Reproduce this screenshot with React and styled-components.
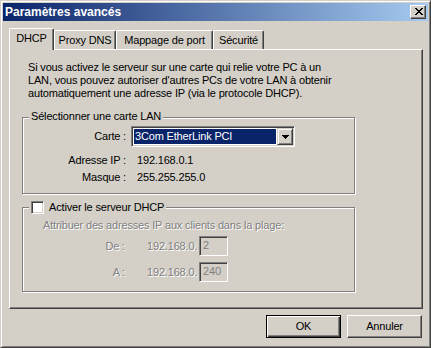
import React from "react";
import styled, { createGlobalStyle } from "styled-components";

const FACE = "#d4d0c8";
const SHADOW = "#808080";
const DARK = "#404040";

const Global = createGlobalStyle`
  html, body { margin: 0; padding: 0; background: ${FACE}; }
  body {
    font-family: "Liberation Sans", Arial, sans-serif;
    font-size: 11px;
    letter-spacing: -0.17px;
    color: #000;
  }
  * { box-sizing: border-box; }
`;

const Window = styled.div`
  width: 431px;
  height: 348px;
  background: ${FACE};
  border: 1px solid;
  border-color: ${FACE} ${DARK} ${DARK} ${FACE};
  box-shadow: inset 1px 1px #fff, inset -1px -1px ${SHADOW};
  padding: 2px;
  display: flex;
  flex-direction: column;
`;

const TitleBar = styled.div`
  height: 18px;
  flex: none;
  display: flex;
  align-items: center;
  justify-content: space-between;
  padding: 0 2px 0 2px;
  background: linear-gradient(to right, #0a246a, #a6caf0);
`;

const Title = styled.span`
  color: #fff;
  font-weight: bold;
  font-size: 12px;
  letter-spacing: 0;
  line-height: 14px;
`;

const CloseButton = styled.div`
  width: 16px;
  height: 14px;
  background: ${FACE};
  border: 1px solid;
  border-color: #fff ${DARK} ${DARK} #fff;
  box-shadow: inset -1px -1px ${SHADOW};
  display: flex;
  justify-content: center;
  align-items: flex-start;
  padding: 2px 0 0 1px;
`;

const Body = styled.div`
  flex: 1;
  display: flex;
  flex-direction: column;
  padding: 7px 5px 7px 6px;
`;

const TabStrip = styled.div`
  height: 21px;
  flex: none;
  display: flex;
  align-items: flex-end;
  position: relative;
  z-index: 2;
`;

const Tab = styled.div`
  width: ${(p) => p.$w}px;
  height: ${(p) => (p.$active ? 22 : 19)}px;
  margin-bottom: ${(p) => (p.$active ? -1 : 0)}px;
  background: ${FACE};
  border-left: 1px solid #fff;
  border-top: 1px solid #fff;
  border-right: 1px solid ${DARK};
  border-top-left-radius: 2px;
  border-top-right-radius: 2px;
  box-shadow: inset -1px 0 ${SHADOW};
  display: flex;
  justify-content: center;
  align-items: flex-start;
  padding-top: 3px;
  line-height: 13px;
  white-space: nowrap;
`;

const Panel = styled.div`
  flex: 1;
  position: relative;
  z-index: 1;
  border-top: 1px solid #fff;
  border-left: 1px solid #fff;
  border-right: 1px solid ${DARK};
  border-bottom: 1px solid ${DARK};
  box-shadow: inset -1px -1px ${SHADOW};
  padding: 11px 0 0 12px;
  display: flex;
  flex-direction: column;
  align-items: flex-start;
`;

const Paragraph = styled.p`
  margin: 0 0 0 6px;
  line-height: 13px;
  white-space: nowrap;
`;

const Group = styled.div`
  position: relative;
  width: 333px;
  margin-top: ${(p) => p.$mt}px;
  border: 1px solid ${SHADOW};
  box-shadow: inset 1px 1px #fff, 1px 1px #fff;
  padding: ${(p) => p.$pad};
`;

const Legend = styled.div`
  position: absolute;
  left: 6px;
  top: ${(p) => p.$top}px;
  padding: 0 2px;
  background: ${FACE};
  line-height: 13px;
  display: flex;
  align-items: center;
  gap: 5px;
  white-space: nowrap;
`;

const FieldGrid = styled.div`
  display: grid;
  grid-template-columns: 103px auto;
  column-gap: 5px;
  align-items: center;
`;

const FieldLabel = styled.div`
  text-align: right;
  line-height: 13px;
  white-space: nowrap;
  margin-top: ${(p) => p.$mt || 0}px;
`;

const FieldValue = styled.div`
  padding-left: 6px;
  line-height: 13px;
  margin-top: ${(p) => p.$mt || 0}px;
`;

const Combo = styled.div`
  width: 164px;
  height: 21px;
  background: #fff;
  border: 1px solid;
  border-color: ${SHADOW} #fff #fff ${SHADOW};
  box-shadow: inset 1px 1px ${DARK}, inset -1px -1px ${FACE};
  padding: 2px;
  display: flex;
  align-items: stretch;
`;

const ComboText = styled.div`
  flex: 1;
  background: #0a246a;
  color: #fff;
  line-height: 15px;
  padding-left: 1px;
  margin-right: 1px;
  white-space: nowrap;
  overflow: hidden;
`;

const ArrowButton = styled.div`
  width: 16px;
  margin: -1px -1px -1px 0;
  background: ${FACE};
  border: 1px solid;
  border-color: ${FACE} ${DARK} ${DARK} ${FACE};
  box-shadow: inset 1px 1px #fff, inset -1px -1px ${SHADOW};
  display: flex;
  align-items: center;
  justify-content: center;
`;

const Checkbox = styled.div`
  width: 13px;
  height: 13px;
  background: #fff;
  border: 1px solid;
  border-color: ${SHADOW} #fff #fff ${SHADOW};
  box-shadow: inset 1px 1px ${DARK}, inset -1px -1px ${FACE};
`;

const Disabled = styled.div`
  color: ${SHADOW};
  text-shadow: 1px 1px #fff;
  line-height: 13px;
  white-space: nowrap;
`;

const Hint = styled(Disabled)`
  margin-left: 20px;
`;

const RangeRow = styled.div`
  display: flex;
  align-items: center;
  margin-top: ${(p) => p.$mt}px;
`;

const RangeLabel = styled(Disabled)`
  width: 102px;
  text-align: right;
`;

const Prefix = styled(Disabled)`
  width: 52px;
  margin-left: 22px;
`;

const Edit = styled.div`
  width: 29px;
  height: 20px;
  background: ${FACE};
  color: ${SHADOW};
  border: 1px solid;
  border-color: ${SHADOW} #fff #fff ${SHADOW};
  box-shadow: inset 1px 1px ${DARK}, inset -1px -1px ${FACE};
  padding-left: 3px;
  line-height: 17px;
`;

const ButtonRow = styled.div`
  flex: none;
  display: flex;
  justify-content: flex-end;
  gap: 6px;
  margin-top: 6px;
  padding-right: 1px;
`;

const Button = styled.div`
  width: 75px;
  height: 23px;
  background: ${FACE};
  display: flex;
  align-items: center;
  justify-content: center;
  line-height: 13px;
  border: 1px solid;
  border-color: ${(p) => (p.$default ? "#000" : `#fff ${DARK} ${DARK} #fff`)};
  box-shadow: ${(p) =>
    p.$default
      ? `inset 1px 1px #fff, inset -1px -1px ${DARK}, inset -2px -2px ${SHADOW}`
      : `inset -1px -1px ${SHADOW}`};
`;

const CloseGlyph = () => (
  <svg width="8" height="7" viewBox="0 0 8 7" shapeRendering="crispEdges">
    <g fill="#000">
      <rect x="0" y="0" width="2" height="1" />
      <rect x="6" y="0" width="2" height="1" />
      <rect x="1" y="1" width="2" height="1" />
      <rect x="5" y="1" width="2" height="1" />
      <rect x="2" y="2" width="4" height="1" />
      <rect x="3" y="3" width="2" height="1" />
      <rect x="2" y="4" width="4" height="1" />
      <rect x="1" y="5" width="2" height="1" />
      <rect x="5" y="5" width="2" height="1" />
      <rect x="0" y="6" width="2" height="1" />
      <rect x="6" y="6" width="2" height="1" />
    </g>
  </svg>
);

const DownArrow = () => (
  <svg width="7" height="4" viewBox="0 0 7 4" shapeRendering="crispEdges">
    <g fill="#000">
      <rect x="0" y="0" width="7" height="1" />
      <rect x="1" y="1" width="5" height="1" />
      <rect x="2" y="2" width="3" height="1" />
      <rect x="3" y="3" width="1" height="1" />
    </g>
  </svg>
);

const tabs = [
  { label: "DHCP", w: 45, active: true },
  { label: "Proxy DNS", w: 62 },
  { label: "Mappage de port", w: 97 },
  { label: "Sécurité", w: 51 },
];

export default function App() {
  return (
    <>
      <Global />
      <Window>
        <TitleBar>
          <Title>Paramètres avancés</Title>
          <CloseButton>
            <CloseGlyph />
          </CloseButton>
        </TitleBar>
        <Body>
          <TabStrip>
            {tabs.map((t) => (
              <Tab key={t.label} $w={t.w} $active={t.active}>
                {t.label}
              </Tab>
            ))}
          </TabStrip>
          <Panel>
            <Paragraph>
              Si vous activez le serveur sur une carte qui relie votre PC à un
              <br />
              LAN, vous pouvez autoriser d'autres PCs de votre LAN à obtenir
              <br />
              automatiquement une adresse IP (via le protocole DHCP).
            </Paragraph>
            <Group $mt={17} $pad="8px 0 9px 0">
              <Legend $top={-8}>Sélectionner une carte LAN</Legend>
              <FieldGrid>
                <FieldLabel>Carte :</FieldLabel>
                <Combo>
                  <ComboText>3Com EtherLink PCI</ComboText>
                  <ArrowButton>
                    <DownArrow />
                  </ArrowButton>
                </Combo>
                <FieldLabel $mt={7}>Adresse IP :</FieldLabel>
                <FieldValue $mt={7}>192.168.0.1</FieldValue>
                <FieldLabel $mt={4}>Masque :</FieldLabel>
                <FieldValue $mt={4}>255.255.255.0</FieldValue>
              </FieldGrid>
            </Group>
            <Group $mt={13} $pad="11px 0 9px 0">
              <Legend $top={-7}>
                <Checkbox />
                <span>Activer le serveur DHCP</span>
              </Legend>
              <Hint>Attribuer des adresses IP aux clients dans la plage:</Hint>
              <RangeRow $mt={4}>
                <RangeLabel>De :</RangeLabel>
                <Prefix>192.168.0.</Prefix>
                <Edit>2</Edit>
              </RangeRow>
              <RangeRow $mt={6}>
                <RangeLabel>A :</RangeLabel>
                <Prefix>192.168.0.</Prefix>
                <Edit>240</Edit>
              </RangeRow>
            </Group>
          </Panel>
          <ButtonRow>
            <Button $default>OK</Button>
            <Button>Annuler</Button>
          </ButtonRow>
        </Body>
      </Window>
    </>
  );
}
